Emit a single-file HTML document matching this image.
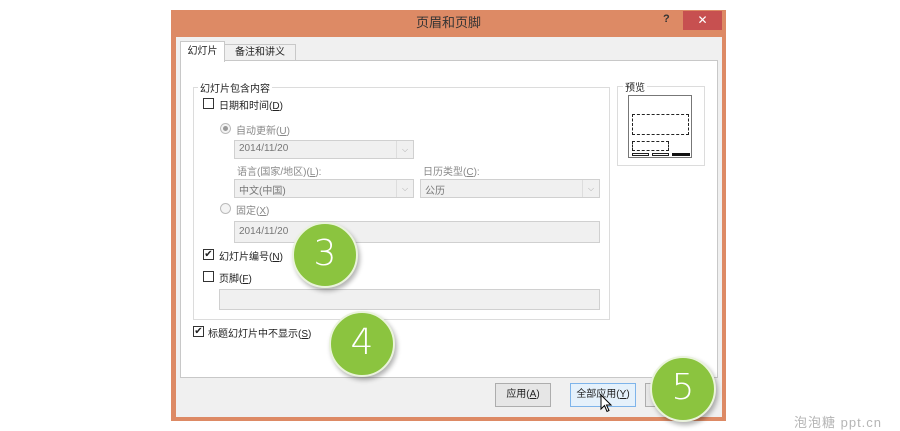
<!DOCTYPE html>
<html><head><meta charset="utf-8"><style>
*{margin:0;padding:0;box-sizing:border-box}
body{width:900px;height:431px;background:#fff;position:relative;overflow:hidden;font-family:"Liberation Sans","Noto Sans CJK SC",sans-serif;font-size:10px;color:#222}
.a{position:absolute}
.dlg{left:171px;top:10px;width:555px;height:411px;background:#dd8a65}
.inner{left:176px;top:37px;width:546px;height:380px;background:#f0f0f0}
.panel{left:180px;top:60px;width:538px;height:318px;background:#fff;border:1px solid #c8c8c8}
.grp{border:1px solid #dcdcdc}
.lbl{background:#fff;padding:0 2px;white-space:nowrap}
.cb{width:11px;height:11px;border:1px solid #333;background:#fff}
.rd{width:11px;height:11px;border:1px solid #bbb;border-radius:50%;background:#f4f4f4}
.combo{background:#f0f0f0;border:1px solid #d0d0d0;color:#777;padding:2px 4px;font-size:10px}
.arrow{position:absolute;right:0;top:0;bottom:0;width:17px;border-left:1px solid #ddd;color:#aaa;text-align:center;font-size:8px;line-height:17px}
.gray{color:#888}
.btn{border:1px solid #adadad;background:#e6e6e6;text-align:center;line-height:22px;font-size:10px}
.circ{width:66px;height:66px;border-radius:50%;background:#8bc43f;border:2px solid #eaf3dc;box-shadow:2px 3px 5px rgba(0,0,0,.3);color:#fff;font-size:36px;text-align:center;line-height:60px;font-family:"DejaVu Sans","Liberation Sans",sans-serif;font-weight:200}
</style></head><body>
<div class="a dlg"></div>
<div class="a" style="left:171px;top:12px;width:555px;text-align:center;color:#333;font-size:13px">页眉和页脚</div>
<div class="a" style="left:663px;top:13px;font-size:11px;color:#333;font-weight:bold">?</div>
<div class="a" style="left:683px;top:11px;width:39px;height:19px;background:#c75050;color:#fff;text-align:center;font-size:12px;line-height:18px">✕</div>
<div class="a inner"></div>
<div class="a" style="left:224px;top:44px;width:72px;height:17px;background:#f0f0f0;border:1px solid #c8c8c8;text-align:center;line-height:15px">备注和讲义</div>
<div class="a panel"></div>
<div class="a" style="left:180px;top:41px;width:45px;height:21px;background:#fff;border:1px solid #c8c8c8;border-bottom:none;text-align:center;line-height:19px">幻灯片</div>

<div class="a grp" style="left:193px;top:87px;width:417px;height:233px"></div>
<div class="a lbl" style="left:198px;top:80px">幻灯片包含内容</div>
<div class="a grp" style="left:617px;top:86px;width:88px;height:80px"></div>
<div class="a lbl" style="left:623px;top:79px">预览</div>
<div class="a" style="left:628px;top:95px;width:64px;height:63px;border:1px solid #777;background:#fff"></div>
<div class="a" style="left:632px;top:114px;width:57px;height:21px;border:1px dashed #222"></div>
<div class="a" style="left:632px;top:141px;width:37px;height:10px;border:1px dashed #222"></div>
<div class="a" style="left:632px;top:153px;width:17px;height:3px;border:1px solid #222"></div>
<div class="a" style="left:652px;top:153px;width:17px;height:3px;border:1px solid #222"></div>
<div class="a" style="left:672px;top:153px;width:18px;height:3px;background:#111"></div>

<div class="a cb" style="left:203px;top:98px"></div>
<div class="a" style="left:219px;top:97px">日期和时间(<u>D</u>)</div>
<div class="a rd" style="left:220px;top:123px"><div style="width:5px;height:5px;border-radius:50%;background:#999;margin:2px"></div></div>
<div class="a gray" style="left:236px;top:122px">自动更新(<u>U</u>)</div>
<div class="a combo" style="left:234px;top:140px;width:180px;height:19px">2014/11/20<div class="arrow">⌵</div></div>
<div class="a gray" style="left:237px;top:163px">语言(国家/地区)(<u>L</u>):</div>
<div class="a gray" style="left:423px;top:163px">日历类型(<u>C</u>):</div>
<div class="a combo" style="left:234px;top:179px;width:180px;height:19px">中文(中国)<div class="arrow">⌵</div></div>
<div class="a combo" style="left:420px;top:179px;width:180px;height:19px">公历<div class="arrow">⌵</div></div>
<div class="a rd" style="left:220px;top:203px"></div>
<div class="a gray" style="left:236px;top:202px">固定(<u>X</u>)</div>
<div class="a combo" style="left:234px;top:221px;width:366px;height:22px;line-height:15px">2014/11/20</div>
<div class="a cb" style="left:203px;top:249px;font-size:10px;line-height:9px;text-align:center">✔</div>
<div class="a" style="left:219px;top:248px">幻灯片编号(<u>N</u>)</div>
<div class="a cb" style="left:203px;top:271px"></div>
<div class="a" style="left:219px;top:270px">页脚(<u>F</u>)</div>
<div class="a combo" style="left:219px;top:289px;width:381px;height:21px"></div>
<div class="a cb" style="left:193px;top:326px;font-size:10px;line-height:9px;text-align:center">✔</div>
<div class="a" style="left:208px;top:325px">标题幻灯片中不显示(<u>S</u>)</div>

<div class="a btn" style="left:495px;top:383px;width:56px;height:24px">应用(<u>A</u>)</div>
<div class="a btn" style="left:570px;top:383px;width:66px;height:24px;background:#e5f1fb;border-color:#7eb4ea">全部应用(<u>Y</u>)</div>
<div class="a btn" style="left:645px;top:383px;width:60px;height:24px"></div>
<svg class="a" style="left:600px;top:394px" width="14" height="20"><path d="M1 1 L1 15 L4.5 11.5 L7 17.5 L9 16.5 L6.5 11 L11 11 Z" fill="#fff" stroke="#000" stroke-width="1"/></svg>

<div class="a circ" style="left:292px;top:222px">3</div>
<div class="a circ" style="left:329px;top:311px">4</div>
<div class="a circ" style="left:650px;top:356px">5</div>
<div class="a" style="left:794px;top:412px;color:#b5b5b5;font-size:13px;letter-spacing:1px">泡泡糖 ppt.cn</div>
</body></html>
